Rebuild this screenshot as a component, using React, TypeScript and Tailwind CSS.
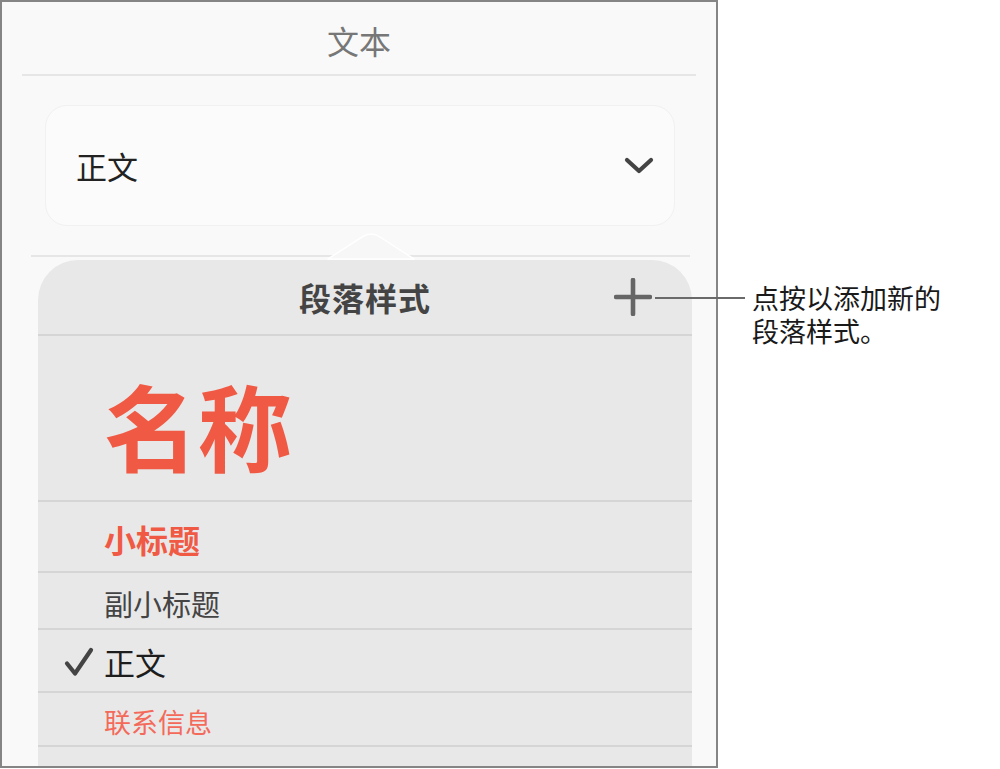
const cjk = { fontFamily: '"Noto Sans CJK SC", "Noto Sans", sans-serif' }

function Chevron() {
  return (
    <svg width="30" height="20" viewBox="0 0 30 20" fill="none">
      <path d="M3 4l12 11L27 4" stroke="#444" strokeWidth="4.2" strokeLinecap="round" strokeLinejoin="round" />
    </svg>
  )
}

function Plus() {
  return (
    <svg width="38" height="38" viewBox="0 0 38 38" fill="none">
      <path d="M19 2v34M2 19h34" stroke="#666" strokeWidth="4.6" strokeLinecap="round" />
    </svg>
  )
}

function Check() {
  return (
    <svg width="30" height="30" viewBox="0 0 30 30" fill="none">
      <path d="M3 16.5l8 10L27 3" stroke="#444" strokeWidth="4.2" strokeLinecap="round" strokeLinejoin="round" />
    </svg>
  )
}

// small rounded pointer on top of the styles popover
function Pointer() {
  return (
    <svg width="90" height="30" viewBox="0 0 90 30" fill="none">
      <path
        d="M2 28 L36 6 Q45 0 54 6 L88 28 Z"
        fill="#f7f7f7"
        stroke="#ffffff"
        strokeWidth="1.5"
        strokeLinejoin="round"
      />
    </svg>
  )
}

function StyleRow({ children, className }: { children: React.ReactNode; className: string }) {
  return (
    <div className={`flex items-center border-b-2 border-[#d5d5d5] ${className}`}>{children}</div>
  )
}

export default function App() {
  return (
    <div className="relative w-[1000px] h-[769px] bg-white overflow-hidden" style={cjk}>
      <div className="w-[718px] h-[768px] border-2 border-[#858585] bg-[#f9f9f9] overflow-hidden flex flex-col">
        <div className="h-[72px] pt-[4px] flex items-center justify-center text-[32px] text-[#777]">
          文本
        </div>
        <div className="mx-[20px] h-[2px] bg-[#e6e6e6]" />

        <div className="mt-[29px] ml-[43px] mr-[41px] h-[121px] rounded-[22px] border border-[#f1f1f1] bg-[#fbfbfb] flex items-center justify-between pl-[30px] pr-[20px]">
          <span className="text-[31px] text-[#222] leading-none">正文</span>
          <Chevron />
        </div>

        <div className="relative mt-[29px] ml-[29px] mr-[26px] h-[2px] bg-[#e6e6e6]">
          <div className="absolute left-[295px] -top-[24px]">
            <Pointer />
          </div>
        </div>

        <div className="mt-[3px] ml-[36px] mr-[24px] flex-1 rounded-t-[40px] bg-[#e8e8e8] flex flex-col">
          <div className="h-[76px] border-b-2 border-[#d5d5d5] flex items-center justify-center relative">
            <span className="text-[32px] font-bold text-[#444] tracking-[1px]">段落样式</span>
            <div className="absolute right-[40px] top-[18px]">
              <Plus />
            </div>
          </div>
          <StyleRow className="h-[166px] pl-[66px] pt-[12px]">
            <span className="text-[94px] font-bold text-[#f05a45] leading-none">名称</span>
          </StyleRow>
          <StyleRow className="h-[71px] pl-[66px] pt-[4px]">
            <span className="text-[32px] font-bold text-[#f05a45] leading-none">小标题</span>
          </StyleRow>
          <StyleRow className="h-[57px] pl-[66px] pt-[6px]">
            <span className="text-[29px] text-[#444] leading-none">副小标题</span>
          </StyleRow>
          <StyleRow className="h-[63px] pl-[26px] pt-[2px] gap-[10px]">
            <Check />
            <span className="text-[31px] text-[#1d1d1d] leading-none">正文</span>
          </StyleRow>
          <StyleRow className="h-[54px] pl-[66px] pt-[4px]">
            <span className="text-[27px] text-[#f46a5a] leading-none">联系信息</span>
          </StyleRow>
        </div>
      </div>

      {/* callout for the add button */}
      <div className="absolute left-[655px] top-[297px] w-[90px] h-[2px] bg-[#6a6a6a]" />
      <p className="absolute left-[752px] top-[281px] text-[27px] leading-[33px] text-[#1a1a1a]">
        点按以添加新的
        <br />
        段落样式。
      </p>
    </div>
  )
}
